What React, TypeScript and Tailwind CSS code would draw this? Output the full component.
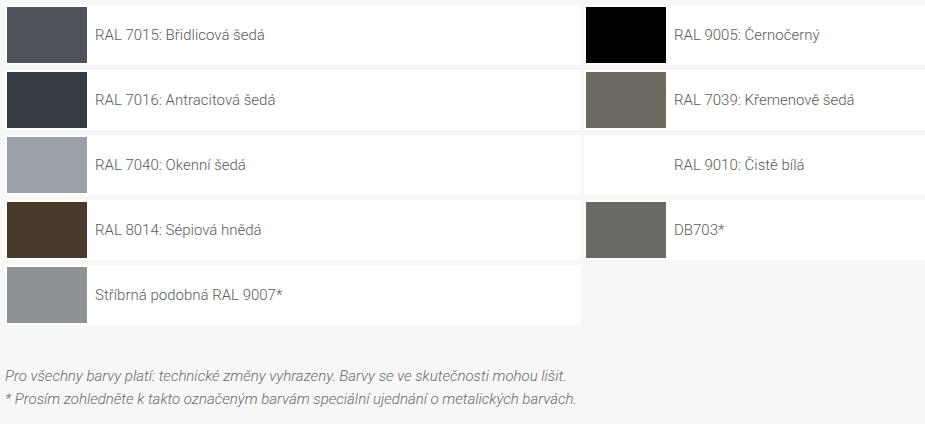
const colors = [
  { name: "RAL 7015: Břidlicová šedá", swatch: "bg-[#4f535a]" },
  { name: "RAL 9005: Černočerný", swatch: "bg-[#000000]" },
  { name: "RAL 7016: Antracitová šedá", swatch: "bg-[#363c43]" },
  { name: "RAL 7039: Křemenově šedá", swatch: "bg-[#6c6960]" },
  { name: "RAL 7040: Okenní šedá", swatch: "bg-[#9ba1a8]" },
  { name: "RAL 9010: Čistě bílá", swatch: "bg-white" },
  { name: "RAL 8014: Sépiová hnědá", swatch: "bg-[#4a3a2b]" },
  { name: "DB703*", swatch: "bg-[#6b6966]" },
  { name: "Stříbrná podobná RAL 9007*", swatch: "bg-[#909396]" },
];

const App = () => {
  return (
    <div
      className="min-h-[424px] bg-[#f7f7f7] pl-[5px] pt-[5px] text-[#666666]"
      style={{ fontFamily: "Roboto, 'Noto Sans', sans-serif" }}
    >
      <div className="grid grid-cols-[576px_1fr] gap-x-[3px] gap-y-[5px]">
        {colors.map((c) => (
          <div key={c.name} className="flex h-[60px] items-center bg-white p-[2px]">
            <div className={`h-[56px] w-[80px] shrink-0 ${c.swatch}`}></div>
            <span className="ml-[8px] text-[15px] font-light text-[#5a5a5a]">
              {c.name}
            </span>
          </div>
        ))}
      </div>

      {/* poznámky */}
      <div className="mt-[40px] text-[15px] font-light italic leading-[23px] text-[#6a6a6a]">
        <p>
          Pro všechny barvy platí: technické změny vyhrazeny. Barvy se ve
          skutečnosti mohou lišit.
        </p>
        <p>
          * Prosím zohledněte k takto označeným barvám speciální ujednání o
          metalických barvách.
        </p>
      </div>
    </div>
  );
};

export default App;
